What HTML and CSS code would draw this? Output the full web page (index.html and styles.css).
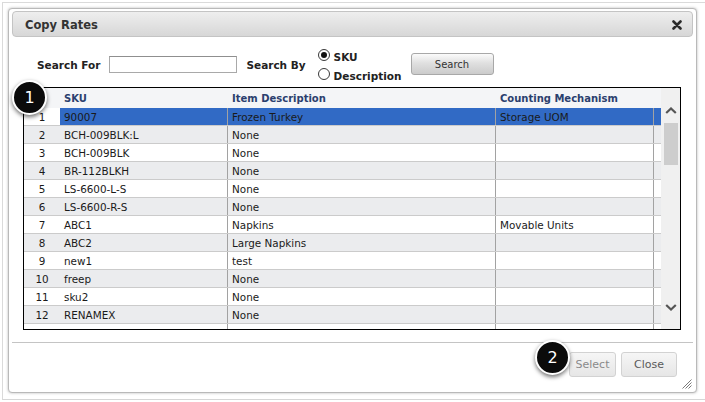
FILE: index.html
```html
<!DOCTYPE html>
<html>
<head>
<meta charset="utf-8">
<title>Copy Rates</title>
<link rel="stylesheet" href="styles.css">
</head>
<body>
<div class="page">
  <div class="dialog">
    <div class="titlebar">
      <span class="title">Copy Rates</span>
      <svg class="close" width="10" height="10" viewBox="0 0 10 10"><path d="M1.5 1.5L8.5 8.5M8.5 1.5L1.5 8.5" stroke="#2b2b2b" stroke-width="2.6" stroke-linecap="round"/></svg>
    </div>
    <div class="search-row">
      <span class="label">Search For</span>
      <span class="input"></span>
      <span class="label by">Search By</span>
      <div class="radios">
        <div class="radio-line"><span class="radio checked"></span><span class="rlabel">SKU</span></div>
        <div class="radio-line"><span class="radio"></span><span class="rlabel">Description</span></div>
      </div>
      <span class="btn search-btn">Search</span>
    </div>
    <div class="grid-wrap">
      <div class="grid">
        <div class="row head">
          <span class="cell num"></span>
          <span class="cell">SKU</span>
          <span class="cell">Item Description</span>
          <span class="cell">Counting Mechanism</span>
          <span class="cell"></span>
        </div>
        <div class="rows">
          <div class="row sel"><span class="cell num">1</span><span class="cell c">90007</span><span class="cell c">Frozen Turkey</span><span class="cell c">Storage UOM</span><span class="cell"></span></div>
          <div class="row alt"><span class="cell num">2</span><span class="cell c">BCH-009BLK:L</span><span class="cell c">None</span><span class="cell c"></span><span class="cell"></span></div>
          <div class="row"><span class="cell num">3</span><span class="cell c">BCH-009BLK</span><span class="cell c">None</span><span class="cell c"></span><span class="cell"></span></div>
          <div class="row alt"><span class="cell num">4</span><span class="cell c">BR-112BLKH</span><span class="cell c">None</span><span class="cell c"></span><span class="cell"></span></div>
          <div class="row"><span class="cell num">5</span><span class="cell c">LS-6600-L-S</span><span class="cell c">None</span><span class="cell c"></span><span class="cell"></span></div>
          <div class="row alt"><span class="cell num">6</span><span class="cell c">LS-6600-R-S</span><span class="cell c">None</span><span class="cell c"></span><span class="cell"></span></div>
          <div class="row"><span class="cell num">7</span><span class="cell c">ABC1</span><span class="cell c">Napkins</span><span class="cell c">Movable Units</span><span class="cell"></span></div>
          <div class="row alt"><span class="cell num">8</span><span class="cell c">ABC2</span><span class="cell c">Large Napkins</span><span class="cell c"></span><span class="cell"></span></div>
          <div class="row"><span class="cell num">9</span><span class="cell c">new1</span><span class="cell c">test</span><span class="cell c"></span><span class="cell"></span></div>
          <div class="row alt"><span class="cell num">10</span><span class="cell c">freep</span><span class="cell c">None</span><span class="cell c"></span><span class="cell"></span></div>
          <div class="row"><span class="cell num">11</span><span class="cell c">sku2</span><span class="cell c">None</span><span class="cell c"></span><span class="cell"></span></div>
          <div class="row alt"><span class="cell num">12</span><span class="cell c">RENAMEX</span><span class="cell c">None</span><span class="cell c"></span><span class="cell"></span></div>
          <div class="row"><span class="cell num"></span><span class="cell c"></span><span class="cell c"></span><span class="cell c"></span><span class="cell"></span></div>
        </div>
      </div>
      <div class="scrollbar">
        <svg class="chev up" width="12" height="7" viewBox="0 0 12 7"><path d="M1.2 6L6 1.5L10.8 6" fill="none" stroke="#555" stroke-width="2.2"/></svg>
        <div class="thumb"></div>
        <div class="spacer"></div>
        <svg class="chev down" width="12" height="7" viewBox="0 0 12 7"><path d="M1.2 1L6 5.5L10.8 1" fill="none" stroke="#555" stroke-width="2.2"/></svg>
      </div>
    </div>
    <div class="buttonpane">
      <span class="btn pane-btn disabled">Select</span>
      <span class="btn pane-btn close-btn">Close</span>
    </div>
    <svg class="grip" width="12" height="12" viewBox="0 0 12 12"><path d="M11.5 2.5L2.5 11.5M11.5 5.5L5.5 11.5M11.5 8.5L8.5 11.5" stroke="#7a7a7a" stroke-width="1"/></svg>
  </div>
</div>
<div class="badge b1">1</div>
<div class="badge b2">2</div>
</body>
</html>
```

FILE: styles.css
```css
* { box-sizing: border-box; }
html, body { margin: 0; padding: 0; }
body {
  background: #fff;
  font-family: "DejaVu Sans", Verdana, sans-serif;
  color: #222;
  width: 705px;
  height: 402px;
  overflow: hidden;
}
.page {
  margin: 2px 0 0 2px;
  height: 398px;
  border-top: 1px solid #dadada;
  border-left: 1px solid #dadada;
  border-bottom: 1px solid #d6d6d6;
  padding: 5px 0 0 5px;
}
.dialog {
  position: relative;
  width: 689px;
  height: 385px;
  background: #fff;
  border: 1px solid #b9b9b9;
  border-radius: 4px;
  box-shadow: 0 0 3px rgba(0,0,0,0.28);
  padding: 2px 3px 0 3px;
  display: flex;
  flex-direction: column;
}
.titlebar {
  height: 26px;
  flex: none;
  border: 1px solid #c4c4c4;
  border-radius: 4px;
  background: linear-gradient(to bottom, #eeeeee, #d7d7d7);
  display: flex;
  align-items: center;
  justify-content: space-between;
  padding: 1px 10px 0 12px;
}
.title {
  font-weight: bold;
  font-size: 11.5px;
  color: #333;
}
.search-row {
  flex: none;
  height: 39px;
  margin-top: 11px;
  padding-left: 25px;
  display: flex;
  align-items: flex-start;
}
.label {
  font-weight: bold;
  font-size: 10.5px;
  line-height: 18px;
  margin-top: 8px;
  color: #222;
}
.input {
  width: 128px;
  height: 17px;
  margin: 8px 0 0 9px;
  border: 1px solid #a9a9a9;
  border-top-color: #8f8f8f;
  background: #fff;
}
.by { margin-left: 9px; }
.radios {
  margin-left: 12px;
  display: flex;
  flex-direction: column;
}
.radio-line {
  height: 19px;
  display: flex;
  align-items: flex-start;
}
.radio {
  width: 12px;
  height: 12px;
  margin-top: 1px;
  border: 1px solid #3a3a3a;
  border-radius: 50%;
  background: #fff;
  display: flex;
  align-items: center;
  justify-content: center;
}
.radio.checked::after {
  content: "";
  width: 6px;
  height: 6px;
  border-radius: 50%;
  background: #111;
}
.rlabel {
  margin-left: 4px;
  font-weight: bold;
  font-size: 10.5px;
  line-height: 19px;
  color: #222;
}
.btn {
  display: flex;
  align-items: center;
  justify-content: center;
  border-radius: 3px;
}
.search-btn {
  margin: 5px 0 0 9px;
  width: 83px;
  height: 22px;
  border: 1px solid #a8a8a8;
  background: linear-gradient(to bottom, #fbfbfb, #e0e0e0 45%, #cbcbcb);
  font-size: 10px;
  color: #333;
}
.grid-wrap {
  flex: none;
  height: 243px;
  margin: 0 12px 0 11px;
  border: 1px solid #000;
  display: flex;
}
.grid {
  width: 637px;
  overflow: hidden;
  display: flex;
  flex-direction: column;
}
.row {
  display: grid;
  grid-template-columns: 36px 168px 268px 158px 7px;
  flex: none;
}
.cell {
  display: flex;
  align-items: center;
  padding-left: 4px;
  white-space: nowrap;
  font-size: 10.4px;
}
.cell.num {
  justify-content: center;
  padding-left: 0;
}
.head {
  height: 20px;
  background: #f4f5f7;
}
.head .cell {
  font-size: 10px;
  font-weight: bold;
  color: #2b3f6e;
}
.rows {
  flex: 1;
  overflow: hidden;
}
.rows .row {
  height: 18px;
  border-bottom: 1px solid #cbcbcb;
  color: #1a1a1a;
}
.rows .cell { padding-top: 1px; }
.rows .cell.c { border-right: 1px solid #a2a2a2; }
.rows .row.alt { background: #ebecee; }
.rows .row.sel .cell { background: #316ac5; }
.rows .row.sel .cell.num { background: #fff; }
.scrollbar {
  width: 19px;
  background: #f0f0f0;
  display: flex;
  flex-direction: column;
  align-items: center;
}
.chev.up { margin-top: 19px; }
.thumb {
  margin-top: 9px;
  width: 14px;
  height: 42px;
  background: #cdcdcd;
}
.spacer { flex: 1; }
.chev.down { margin-bottom: 18px; }
.buttonpane {
  flex: 1;
  margin-top: 12px;
  border-top: 1px solid #c4c4c4;
  display: flex;
  justify-content: flex-end;
  align-items: flex-start;
  gap: 5px;
  padding: 9px 16px 0 0;
}
.pane-btn {
  height: 25px;
  border: 1px solid #d2d2d2;
  background: linear-gradient(to bottom, #f6f6f6, #e6e6e6);
  font-size: 11px;
}
.disabled { width: 47px; color: #8a8a8a; }
.close-btn { width: 56px; color: #5a5a5a; }
.grip {
  position: absolute;
  right: 4px;
  bottom: 3px;
}
.badge {
  position: absolute;
  width: 35px;
  height: 35px;
  border-radius: 50%;
  background: #0b0b0b;
  border: 2px solid #fff;
  box-shadow: 0 2px 4px rgba(0,0,0,0.55);
  color: #fff;
  font-family: "DejaVu Sans", sans-serif;
  font-size: 16px;
  display: flex;
  align-items: center;
  justify-content: center;
}
.b1 { left: 12px; top: 80px; }
.b2 { left: 535px; top: 340px; }
```
